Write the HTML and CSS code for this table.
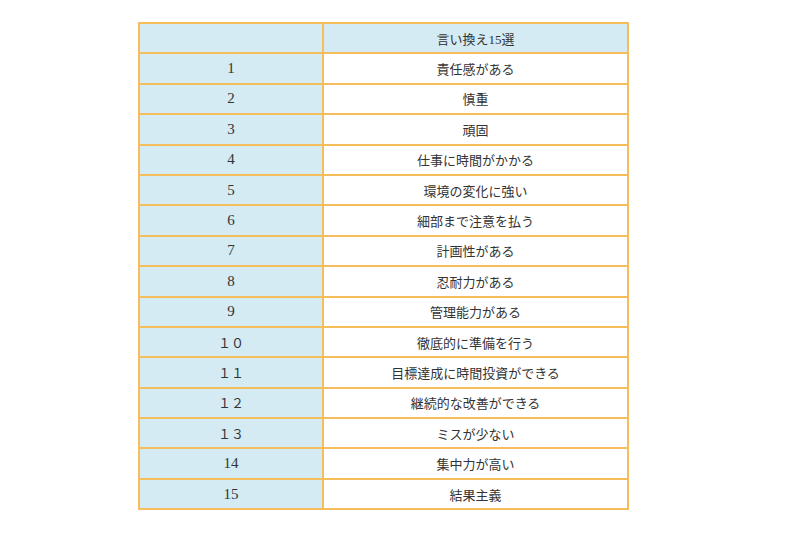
FILE: index.html
```html
<!DOCTYPE html>
<html lang="ja">
<head>
<meta charset="utf-8">
<link rel="stylesheet" href="styles.css">
</head>
<body>
<div class="page">
<table class="list">
<tr class="head"><td class="num"></td><td class="item">言い換え15選</td></tr>
<tr><td class="num">1</td><td class="item">責任感がある</td></tr>
<tr><td class="num">2</td><td class="item">慎重</td></tr>
<tr><td class="num">3</td><td class="item">頑固</td></tr>
<tr><td class="num">4</td><td class="item">仕事に時間がかかる</td></tr>
<tr><td class="num">5</td><td class="item">環境の変化に強い</td></tr>
<tr><td class="num">6</td><td class="item">細部まで注意を払う</td></tr>
<tr><td class="num">7</td><td class="item">計画性がある</td></tr>
<tr><td class="num">8</td><td class="item">忍耐力がある</td></tr>
<tr><td class="num">9</td><td class="item">管理能力がある</td></tr>
<tr><td class="num wide">１０</td><td class="item">徹底的に準備を行う</td></tr>
<tr><td class="num wide">１１</td><td class="item">目標達成に時間投資ができる</td></tr>
<tr><td class="num wide">１２</td><td class="item">継続的な改善ができる</td></tr>
<tr><td class="num wide">１３</td><td class="item">ミスが少ない</td></tr>
<tr><td class="num">14</td><td class="item">集中力が高い</td></tr>
<tr><td class="num">15</td><td class="item">結果主義</td></tr>
</table>
</div>
</body>
</html>
```

FILE: styles.css
```css
html, body {
  margin: 0;
  padding: 0;
  background: #ffffff;
}
.page {
  padding: 22px 0 0 138px;
}
.list {
  border-collapse: collapse;
  width: 491px;
  font-family: "Liberation Serif", "Noto Sans CJK JP", serif;
  font-size: 13px;
  color: #333333;
}
.list td {
  border: 2px solid #f5bd5c;
  height: 28.4px;
  padding: 0;
  text-align: center;
  vertical-align: middle;
}
.list .num {
  width: 182px;
  background: #d4ebf4;
  font-size: 15px;
}
.list .num.wide {
  font-size: 13px;
}
.list .item {
  background: #ffffff;
}
.list .head .item {
  background: #d4ebf4;
}
```
